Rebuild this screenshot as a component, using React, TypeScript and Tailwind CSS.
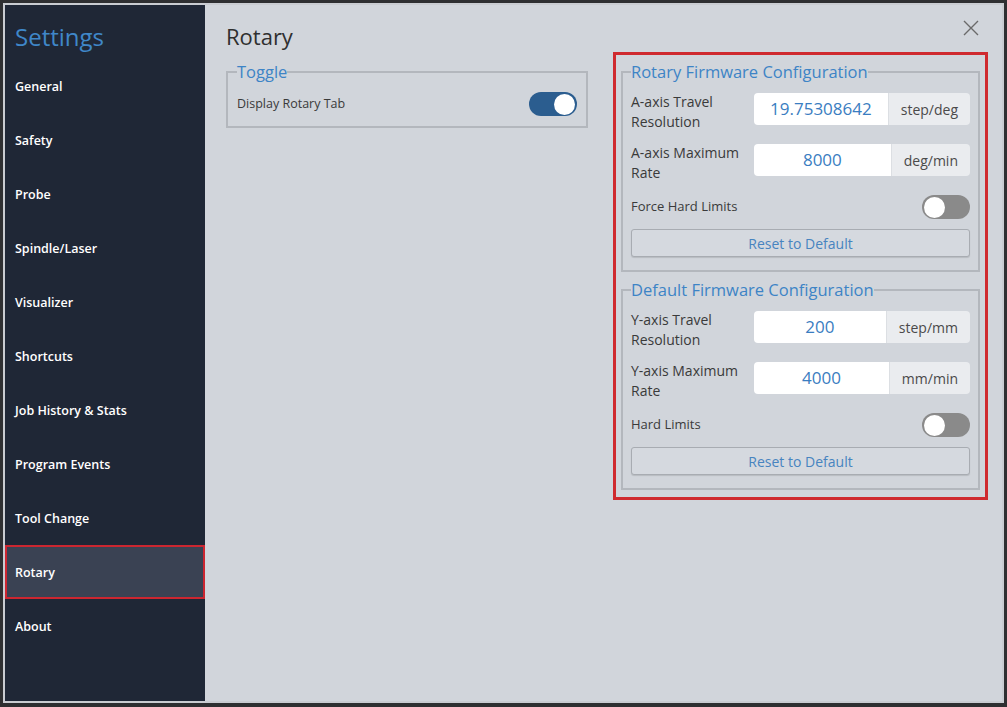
import React from 'react';

const menu = [
  'General',
  'Safety',
  'Probe',
  'Spindle/Laser',
  'Visualizer',
  'Shortcuts',
  'Job History & Stats',
  'Program Events',
  'Tool Change',
  'Rotary',
  'About',
];

function Switch({ on }: { on: boolean }) {
  return (
    <div
      className={`flex h-[24px] w-[48px] items-center rounded-full px-[2px] ${
        on ? 'justify-end bg-[#2b5d8f]' : 'justify-start bg-[#8a8a8a]'
      }`}
    >
      <div className="h-[21px] w-[21px] rounded-full bg-white" />
    </div>
  );
}

function InputRow({ label, value, unit }: { label: string[]; value: string; unit: string }) {
  return (
    <div className="flex h-[32px] items-center">
      <div className="mt-[6px] w-[123px] text-[14px] leading-[20px] text-[#3a3a3a]">
        {label.map((l) => (
          <div key={l}>{l}</div>
        ))}
      </div>
      <div className="flex h-[32px] w-[216px] overflow-hidden rounded-[4px]">
        <div className="flex flex-1 items-center justify-center bg-white text-[17px] text-[#3a7dc1]">
          {value}
        </div>
        <div className="flex items-center border-l border-[#dcdfe3] bg-[#eaecef] px-[12px] text-[14px] text-[#4a4a4a]">
          {unit}
        </div>
      </div>
    </div>
  );
}

function ResetButton() {
  return (
    <button className="h-[28px] w-full rounded-[3px] border border-[#a8acb2] bg-[#d5d9df] text-[14px] text-[#4784c0] shadow-[0_1px_1px_rgba(0,0,0,0.12)]">
      Reset to Default
    </button>
  );
}

function Group({
  title,
  rows,
  toggleLabel,
  className = '',
}: {
  title: string;
  rows: { label: string[]; value: string; unit: string }[];
  toggleLabel: string;
  className?: string;
}) {
  return (
    <fieldset className={`border-2 border-[#b3b7bd] px-[8px] pb-[13px] pt-[11px] ${className}`}>
      <legend className="text-[16.5px] leading-[20px] text-[#3d84c6]">{title}</legend>
      <div className="flex w-[339px] flex-col">
        <InputRow {...rows[0]} />
        <div className="mt-[19px]">
          <InputRow {...rows[1]} />
        </div>
        <div className="mt-[19px] flex items-center justify-between">
          <span className="text-[13px] text-[#3a3a3a]">{toggleLabel}</span>
          <Switch on={false} />
        </div>
        <div className="mt-[10px]">
          <ResetButton />
        </div>
      </div>
    </fieldset>
  );
}

export default function App() {
  return (
    <div
      className="h-[707px] w-[1007px] bg-[#2e2f31] p-[3px] pb-[4px]"
      style={{ fontFamily: '"Open Sans", "Noto Sans", sans-serif' }}
    >
      <div className="flex h-full w-full border-2 border-[#c9ccd1]">
        {/* Sidebar */}
        <div className="flex w-[200px] flex-col bg-[#1f2736]">
          <div className="h-[54px] pl-[10px] pt-[17px] text-[24px] leading-[30px] text-[#3f87c9]">
            Settings
          </div>
          {menu.map((m) => (
            <div
              key={m}
              className={`flex h-[54px] items-center pt-[2px] text-[12.5px] font-semibold text-white ${
                m === 'Rotary' ? 'border-2 border-[#cc2630] bg-[#3a4253] pl-[8px]' : 'pl-[10px]'
              }`}
            >
              {m}
            </div>
          ))}
        </div>

        {/* Main */}
        <div className="relative flex-1 bg-[#d1d5db] pl-[21px] pt-[16px]">
          <button className="absolute right-[23px] top-[15px] text-[#6a6a6a]">
            <svg width="16" height="16" viewBox="0 0 16 16" fill="none" stroke="currentColor" strokeWidth="1.4">
              <path d="M1 1 L15 15 M15 1 L1 15" />
            </svg>
          </button>
          <div className="text-[22px] leading-[30px] text-[#2f2f2f]">Rotary</div>

          <div className="mt-[1px] flex items-start">
            <fieldset className="mt-[10px] w-[362px] border-2 border-[#b3b7bd] px-[9px] pb-[10px] pt-[10px]">
              <legend className="text-[16.5px] leading-[20px] text-[#3d84c6]">Toggle</legend>
              <div className="flex items-center justify-between">
                <span className="text-[12.5px] text-[#3a3a3a]">Display Rotary Tab</span>
                <Switch on={true} />
              </div>
            </fieldset>

            <div className="ml-[25px] w-[375px] border-[3px] border-[#cf2a2f] px-[5px] pb-[7px] pt-[7px]">
              <Group
                title="Rotary Firmware Configuration"
                rows={[
                  { label: ['A-axis Travel', 'Resolution'], value: '19.75308642', unit: 'step/deg' },
                  { label: ['A-axis Maximum', 'Rate'], value: '8000', unit: 'deg/min' },
                ]}
                toggleLabel="Force Hard Limits"
              />
              <Group
                className="mt-[8px]"
                title="Default Firmware Configuration"
                rows={[
                  { label: ['Y-axis Travel', 'Resolution'], value: '200', unit: 'step/mm' },
                  { label: ['Y-axis Maximum', 'Rate'], value: '4000', unit: 'mm/min' },
                ]}
                toggleLabel="Hard Limits"
              />
            </div>
          </div>
        </div>
      </div>
    </div>
  );
}
